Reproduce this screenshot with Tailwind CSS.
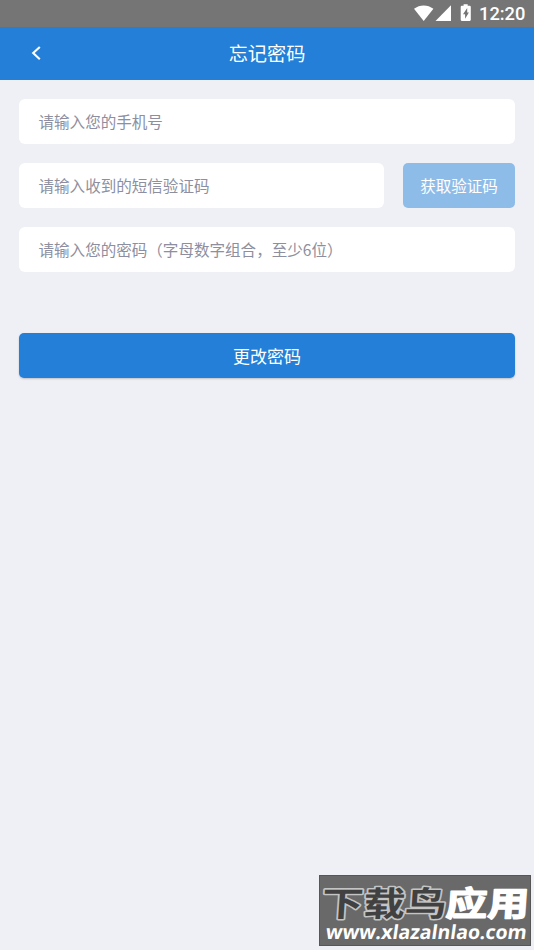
<!DOCTYPE html>
<html lang="zh-CN">
<head>
<meta charset="utf-8">
<title>忘记密码</title>
<script src="https://cdn.jsdelivr.net/npm/@tailwindcss/browser@4"></script>
</head>
<body class="relative flex h-[950px] w-[534px] flex-col overflow-hidden bg-[#eff0f5] font-['Roboto','Noto_Sans_CJK_SC',sans-serif]">
  <div class="flex h-[27px] shrink-0 items-center justify-end bg-[#757575] pr-[9px] text-white">
    <svg class="h-[27px] w-[65px]" viewBox="0 0 65 27" fill="currentColor" aria-hidden="true">
      <path d="M4 8.8C9.8 4.3 17.6 4.3 23.4 8.8L13.7 20.9Z"/>
      <path d="M41 5.2V20.9H25.5Z"/>
      <path fill-rule="evenodd" d="M53.6 4.3H57.7V5.8H59.7Q60.8 5.8 60.8 6.9V19.8Q60.8 20.9 59.7 20.9H51.8Q50.7 20.9 50.7 19.8V6.9Q50.7 5.8 51.8 5.8H53.6ZM57.2 8L53 14.2H55.1V18.8L58.9 12.6H57.2Z"/>
    </svg>
    <span class="ml-[4px] w-[46px] whitespace-nowrap text-[18.3px] leading-[27px] font-medium">12:20</span>
  </div>

  <header class="grid h-[53px] shrink-0 grid-cols-[100px_1fr_100px] items-center bg-[#237fd7] text-white">
    <button class="pl-[31px]" aria-label="返回">
      <svg class="mb-[2px] h-[16px] w-[11px]" viewBox="0 0 11 16" fill="none" stroke="currentColor" stroke-width="2.1"><path d="M8.8 1.9L2.2 8.1L8.8 14.3"/></svg>
    </button>
    <h1 class="pt-[3px] text-center text-[19.2px] leading-[50px]">忘记密码</h1>
  </header>

  <main class="flex flex-col px-[19px] pt-[19px] text-[15.55px] text-[#8d8fa0]">
    <div class="flex h-[45px] items-center rounded-[6px] bg-white pt-[4px] pl-[19.5px]">请输入您的手机号</div>
    <div class="mt-[19px] flex h-[45px] gap-[19px]">
      <div class="flex flex-1 items-center rounded-[6px] bg-white pt-[4px] pl-[19.5px]">请输入收到的短信验证码</div>
      <button class="w-[112px] rounded-[5px] bg-[#8ebce9] pt-[4px] text-white">获取验证码</button>
    </div>
    <div class="mt-[19px] flex h-[45px] items-center rounded-[6px] bg-white pt-[1px] pl-[19.5px] font-['Noto_Sans_CJK_SC',sans-serif]">请输入您的密码（字母数字组合，至少6位）</div>
    <button class="mt-[61px] h-[45px] rounded-[5px] bg-[#237fd7] pt-[4px] text-[17px] text-white shadow-[0_1px_2px_rgba(0,0,0,0.2)]">更改密码</button>
  </main>

  <svg class="absolute top-[875px] left-[319px] h-[71px] w-[212px]" viewBox="0 0 212 71">
    <rect x="0.5" y="0.5" width="211" height="70" fill="#696969" stroke="#565656"/>
    <g class="font-['Noto_Sans_CJK_SC',sans-serif] text-[34px] font-bold" stroke-linejoin="round" paint-order="stroke">
      <text transform="translate(2 41) skewX(-4) scale(1.225 1)" fill="#414141" stroke="#c4c4c4" stroke-width="3">下载鸟</text>
      <text transform="translate(126 41) skewX(-4) scale(1.225 1)" fill="#fff" stroke="#fff" stroke-width="1.4">应用</text>
    </g>
    <text class="font-['Open_Sans',sans-serif] text-[19.5px] font-bold" transform="translate(6 64) skewX(-8)" textLength="201" lengthAdjust="spacingAndGlyphs" fill="#fff">www.xlazalnlao.com</text>
  </svg>
</body>
</html>
